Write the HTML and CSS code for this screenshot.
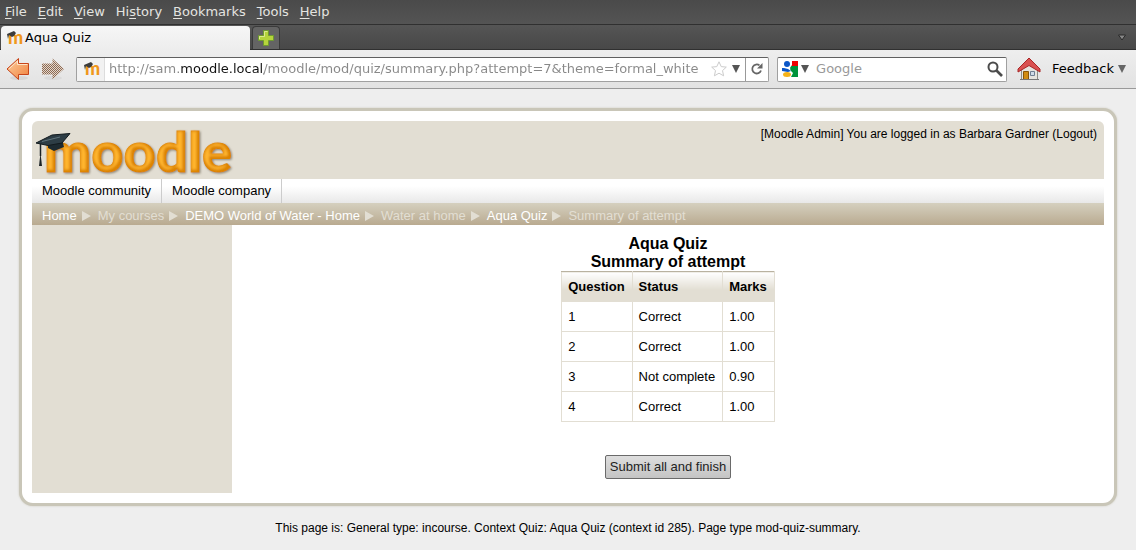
FILE: index.html
```html
<!DOCTYPE html>
<html lang="en">
<head>
    <meta charset="UTF-8">
    <meta name="viewport" content="width=device-width, initial-scale=1.0">
    <title>Aqua Quiz</title>
    <link rel="stylesheet" href="styles.css">
</head>
<body>
    <!-- Shared icon shapes -->
    <svg class="defs" aria-hidden="true">
        <defs>
            <linearGradient id="back" x1="0" y1="0" x2="1" y2="1">
                <stop offset="0" stop-color="#fcd0a0"/>
                <stop offset="1" stop-color="#f0803c"/>
            </linearGradient>
            <pattern id="dither" width="2" height="2" patternUnits="userSpaceOnUse">
                <rect width="2" height="2" fill="#e2d6cc"/>
                <rect width="1" height="1" fill="#8d6a52"/>
                <rect x="1" y="1" width="1" height="1" fill="#8d6a52"/>
            </pattern>
            <!-- Rounded look of the logo: light core, dark edge, soft shadow -->
            <filter id="bevel" x="-5%" y="-5%" width="110%" height="110%">
                <feMorphology in="SourceAlpha" operator="erode" radius="2" result="core"/>
                <feGaussianBlur in="core" stdDeviation="1" result="soft"/>
                <feOffset in="soft" dx="-1" dy="-1" result="light"/>
                <feFlood flood-color="#ffb52e"/>
                <feComposite in2="light" operator="in" result="glow"/>
                <feGaussianBlur in="SourceAlpha" stdDeviation="1"/>
                <feOffset dx="1" dy="1" result="drop"/>
                <feFlood flood-color="#8f8878"/>
                <feComposite in2="drop" operator="in" result="shadow"/>
                <feMerge>
                    <feMergeNode in="shadow"/>
                    <feMergeNode in="SourceGraphic"/>
                    <feMergeNode in="glow"/>
                </feMerge>
            </filter>
            <symbol id="favicon" viewBox="0 0 16 16" overflow="visible">
                <text class="favicon-text" x="1" y="14">m</text>
                <path d="M0 4 L7 1 L9 3 L7 6 L5 7 L2 5 L1 9 Z" fill="#3c3c3c"/>
            </symbol>
        </defs>
    </svg>

    <header class="browser">
        <nav class="menubar">
            <a href="#"><u>F</u>ile</a>
            <a href="#"><u>E</u>dit</a>
            <a href="#"><u>V</u>iew</a>
            <a href="#">Hi<u>s</u>tory</a>
            <a href="#"><u>B</u>ookmarks</a>
            <a href="#"><u>T</u>ools</a>
            <a href="#"><u>H</u>elp</a>
        </nav>
        <div class="tabstrip">
            <button type="button" class="tab">
                <svg width="16" height="16"><use href="#favicon"/></svg>
                <span>Aqua Quiz</span>
            </button>
            <button type="button" class="new-tab" aria-label="New tab">
                <svg width="16" height="16" viewBox="0 0 16 16">
                    <path d="M5.500 .5h5v5h5v5h-5v5h-5v-5h-5v-5h5z" fill="#b5d43c" stroke="#6f9a30"/>
                    <path d="M1.500 9V6.500h5v-5h3" fill="none" stroke="#dcec90"/>
                </svg>
            </button>
            <button type="button" class="all-tabs" aria-label="List all tabs">
                <svg width="8" height="7" viewBox="0 0 8 7"><path d="M.5 1h7L4 6z" fill="#888" stroke="#2a2a2a"/></svg>
            </button>
        </div>
        <div class="toolbar">
            <button type="button" class="tool" aria-label="Back">
                <svg width="24" height="24" viewBox="0 0 24 24">
                    <ellipse cx="13" cy="21" rx="9" ry="2" fill="#d6d6d6"/>
                    <path d="M1 12 12.500 1.500v5h10v11h-10v5z" fill="url(#back)" stroke="#c8451a"/>
                    <path d="M2.800 12 11.500 4v3.500h10" fill="none" stroke="#fde4c8"/>
                </svg>
            </button>
            <button type="button" class="tool" aria-label="Forward">
                <svg width="24" height="24" viewBox="0 0 24 24">
                    <ellipse cx="12" cy="21" rx="9" ry="2" fill="#dadada"/>
                    <path d="M23 12 11.500 1.500v5H1v11h10.500v5z" fill="url(#dither)"/>
                </svg>
            </button>
            <div class="field address">
                <span class="site-id"><svg width="16" height="16"><use href="#favicon"/></svg></span>
                <input type="text" class="url" aria-label="Address" value="http://sam.moodle.local/moodle/mod/quiz/summary.php?attempt=7&amp;theme=formal_white">
                <svg width="16" height="16" viewBox="0 0 16 16">
                    <path d="M8 .8 10.200 5.600 15.300 6.100 11.500 9.600 12.600 14.800 8 12.200 3.400 14.800 4.500 9.600 .7 6.100 5.800 5.600z" fill="#fff" stroke="#ccc"/>
                </svg>
                <svg class="caret" width="8" height="8" viewBox="0 0 8 8"><path d="M0 0h8L4 8z" fill="#555"/></svg>
                <button type="button" class="reload" aria-label="Reload">
                    <svg width="12" height="12" viewBox="0 0 12 12">
                        <path d="M10 7.500A4.500 4.500 0 1 1 8.500 2.400" fill="none" stroke="#666" stroke-width="1.800"/>
                        <path d="M11.500 0v5.500H6z" fill="#666"/>
                    </svg>
                </button>
            </div>
            <div class="field search">
                <svg width="16" height="16" viewBox="0 0 16 16">
                    <path d="M8 0h8v5H8z" fill="#f00000"/>
                    <path d="M8 5h8v11H9z" fill="#00933b"/>
                    <path d="M0 0h10v4L7 8l4 4-2 4H0z" fill="#fff"/>
                    <ellipse cx="5" cy="3" rx="3" ry="3" fill="#0b57c8"/>
                    <path d="M0 7h2l4 1 3 2-3 1-6-1z" fill="#0b57c8"/>
                    <ellipse cx="5" cy="13.500" rx="4" ry="2.500" fill="#f5b21a"/>
                </svg>
                <svg class="caret" width="8" height="8" viewBox="0 0 8 8"><path d="M0 0h8L4 8z" fill="#555"/></svg>
                <input type="text" aria-label="Search" placeholder="Google">
                <svg width="16" height="16" viewBox="0 0 16 16">
                    <circle cx="6" cy="6" r="4.500" fill="none" stroke="#4c4c4c" stroke-width="2"/>
                    <path d="M9.500 9.500 15 15" stroke="#4c4c4c" stroke-width="2.600"/>
                </svg>
            </div>
            <button type="button" class="tool" aria-label="Home">
                <svg width="24" height="24" viewBox="0 0 24 24">
                    <path d="M4.500 11v11.500h16V11l-8-7z" fill="#e6e4df" stroke="#8c8c86"/>
                    <path d="M6.500 14.500h5v8h-5z" fill="#d18b12" stroke="#8a5606"/>
                    <path d="M13.500 14.500h4v4h-4z" fill="#cfdbe8" stroke="#6f7f92"/>
                    <path d="M1 12 12 1 23 12v3L12 8.500 1 15z" fill="#d95050" stroke="#a92626"/>
                    <path d="M3 22.500h19" stroke="#777"/>
                </svg>
            </button>
            <button type="button" class="feedback">
                Feedback
                <svg class="caret" width="8" height="8" viewBox="0 0 8 8"><path d="M0 0h8L4 8z" fill="#666"/></svg>
            </button>
        </div>
    </header>

    <main class="page">
        <div class="banner">
            <a href="#" class="logo" aria-label="Moodle home">
                <svg width="200" height="50" viewBox="0 0 200 50">
                    <text class="logo-text" x="8" y="46" filter="url(#bevel)">moodle</text>
                    <path d="M12 15 26 12.500 28 21 18 25 12 22z" fill="#1d2a30"/>
                    <path d="M0 17 16 9 34 7.500 26 17 12 19.500z" fill="#2d3d45" stroke="#121a1e"/>
                    <path d="M6 15.500 24 11" stroke="#61757e"/>
                    <path d="M4.500 17.500V30" stroke="#1b2327" stroke-width="1.500"/>
                    <path d="M4.500 27 3 40h3z" fill="#1b2327"/>
                </svg>
            </a>
            <div class="login-info">[<a href="#">Moodle Admin</a>] You are logged in as <a href="#">Barbara Gardner</a> (<a href="#">Logout</a>)</div>
        </div>
        <nav class="custom-menu">
            <a href="#">Moodle community</a>
            <a href="#">Moodle company</a>
        </nav>
        <nav class="breadcrumb">
            <a href="#">Home</a>
            <i></i>
            <span>My courses</span>
            <i></i>
            <a href="#">DEMO World of Water - Home</a>
            <i></i>
            <span>Water at home</span>
            <i></i>
            <a href="#">Aqua Quiz</a>
            <i></i>
            <span>Summary of attempt</span>
        </nav>
        <div class="columns">
            <aside class="sidebar"></aside>
            <section class="content">
                <h2>Aqua Quiz</h2>
                <h3>Summary of attempt</h3>
                <table class="summary">
                    <thead>
                        <tr><th>Question</th><th>Status</th><th>Marks</th></tr>
                    </thead>
                    <tbody>
                        <tr><td>1</td><td>Correct</td><td>1.00</td></tr>
                        <tr><td>2</td><td>Correct</td><td>1.00</td></tr>
                        <tr><td>3</td><td>Not complete</td><td>0.90</td></tr>
                        <tr><td>4</td><td>Correct</td><td>1.00</td></tr>
                    </tbody>
                </table>
                <form>
                    <button type="submit" class="submit">Submit all and finish</button>
                </form>
            </section>
        </div>
    </main>

    <footer>This page is: General type: incourse. Context Quiz: Aqua Quiz (context id 285). Page type mod-quiz-summary.</footer>
</body>
</html>
```
FILE: styles.css
```css
/* Global styles */
* {
    box-sizing: border-box;
}

body {
    font-family: "Liberation Sans", Arial, sans-serif;
    font-size: 13px;
    line-height: 16px;
    color: #000;
    background-color: #eee;
    margin: 0;
}

a {
    color: inherit;
    text-decoration: none;
}

button, input {
    font: inherit;
    color: inherit;
    background: none;
    border: none;
    padding: 0;
    margin: 0;
}

svg {
    display: block;
    flex: none;
    overflow: visible;
}

.defs {
    position: absolute;
    width: 0;
    height: 0;
}

.favicon-text {
    font: 900 18px Lato, sans-serif;
    fill: #f0981c;
}

/* Browser window */
.browser {
    font-family: "DejaVu Sans", sans-serif;
}

.menubar {
    display: flex;
    gap: 11px;
    padding: 4px 5px;
    color: #e4e4e0;
    background: linear-gradient(#4a4a4a, #545454);
}

.menubar u {
    text-underline-offset: 2px;
}

.tabstrip {
    display: flex;
    align-items: flex-end;
    height: 26px;
    background: linear-gradient(#555, #484848);
    border-top: 1px solid #303030;
    border-bottom: 1px solid #303030;
}

.tab {
    display: flex;
    align-items: center;
    gap: 2px;
    width: 249px;
    height: 24px;
    margin: 0 2px -1px 1px;
    padding: 0 6px;
    background: linear-gradient(#f6f6f6, #ededed);
    border-radius: 4px 4px 0 0;
}

.new-tab {
    width: 28px;
    height: 23px;
    padding: 0 5px;
    background: #646464;
    border: 1px solid #3a3a3a;
    border-bottom: none;
    border-radius: 4px 4px 0 0;
}

.all-tabs {
    margin: 0 10px 8px auto;
}

.toolbar {
    display: flex;
    align-items: center;
    height: 39px;
    padding: 0 10px 0 6px;
    background: linear-gradient(#eee, #e2e2e2);
    border-bottom: 1px solid #999;
}

.tool {
    margin-right: 11px;
}

.field {
    display: flex;
    align-items: center;
    height: 25px;
    background: #fff;
    border: 1px solid #a0a0a0;
    border-top-color: #606060;
    border-radius: 2px;
}

.field input {
    flex: 1;
    min-width: 0;
    outline: none;
}

.caret {
    margin: 0 5px;
}

.address {
    flex: 1;
}

.site-id {
    display: flex;
    align-items: center;
    height: 23px;
    width: 28px;
    margin-right: 4px;
    padding-left: 7px;
    background: #f2f2f2;
    border-right: 1px solid #ddd;
}

/* the domain is darker than the rest of the address */
.address .url {
    color: transparent;
    background: linear-gradient(90deg, #888 71px, #111 71px, #111 155px, #888 155px);
    -webkit-background-clip: text;
    background-clip: text;
}

.reload {
    height: 23px;
    padding: 0 5px;
    border-left: 1px solid #999;
}

.search {
    width: 230px;
    margin: 0 10px 0 8px;
    padding: 0 3px 0 4px;
}

.search .caret {
    margin: 0 7px 0 3px;
}

.search input::placeholder {
    color: #999;
}

.feedback {
    display: flex;
    align-items: center;
    gap: 4px;
}

.feedback .caret {
    margin: 0;
}

/* Moodle page */
.page {
    margin: 19px 19px 0;
    padding: 10px;
    background: #fff;
    border: 3px solid #c9c6b8;
    border-radius: 14px;
    box-shadow: 0 0 2px #c9c6b8;
}

.banner {
    display: flex;
    justify-content: space-between;
    height: 58px;
    padding: 5px 7px 0 4px;
    background: #e2ded3;
    border-radius: 6px 6px 0 0;
}

.logo-text {
    font: 900 56px Lato, sans-serif;
    fill: #dd8500;
    stroke: #dd8500;
    stroke-width: 1;
}

.login-info {
    font-size: 12px;
}

.custom-menu {
    display: flex;
    height: 24px;
    background: linear-gradient(#fff 30%, #e8e8e8);
}

.custom-menu a {
    padding: 4px 10px;
    border-right: 1px solid #ccc;
}

.breadcrumb {
    display: flex;
    align-items: center;
    gap: 5px;
    height: 22px;
    padding: 3px 10px 0;
    color: #e2ded3;
    background: linear-gradient(#d5d0bf, #b9aa90);
}

.breadcrumb a {
    color: #fff;
}

.breadcrumb i {
    margin-right: 2px;
    border-left: 9px solid #e2ded3;
    border-top: 5px solid transparent;
    border-bottom: 5px solid transparent;
}

.columns {
    display: flex;
    min-height: 268px;
}

.sidebar {
    width: 200px;
    background: #e2ded3;
}

.content {
    flex: 1;
    padding-top: 10px;
    text-align: center;
}

.content h2, .content h3 {
    margin: 0;
    font-size: 16px;
    line-height: 18px;
}

.summary {
    margin: 0 auto 33px;
    border-collapse: collapse;
    text-align: left;
}

.summary th, .summary td {
    height: 30px;
    padding: 0 7px 0 6px;
    border: 1px solid #e2ded3;
}

.summary th {
    background: linear-gradient(#fff, #e2ded3 60%);
    border-top-color: #b9b2a0;
}

.submit {
    height: 24px;
    padding: 0 4px;
    color: #222;
    background: linear-gradient(#dedede, #c4c4c4);
    border: 1px solid #6a6a6a;
    border-radius: 2px;
}

footer {
    margin-top: 14px;
    font-size: 12px;
    text-align: center;
}
```
